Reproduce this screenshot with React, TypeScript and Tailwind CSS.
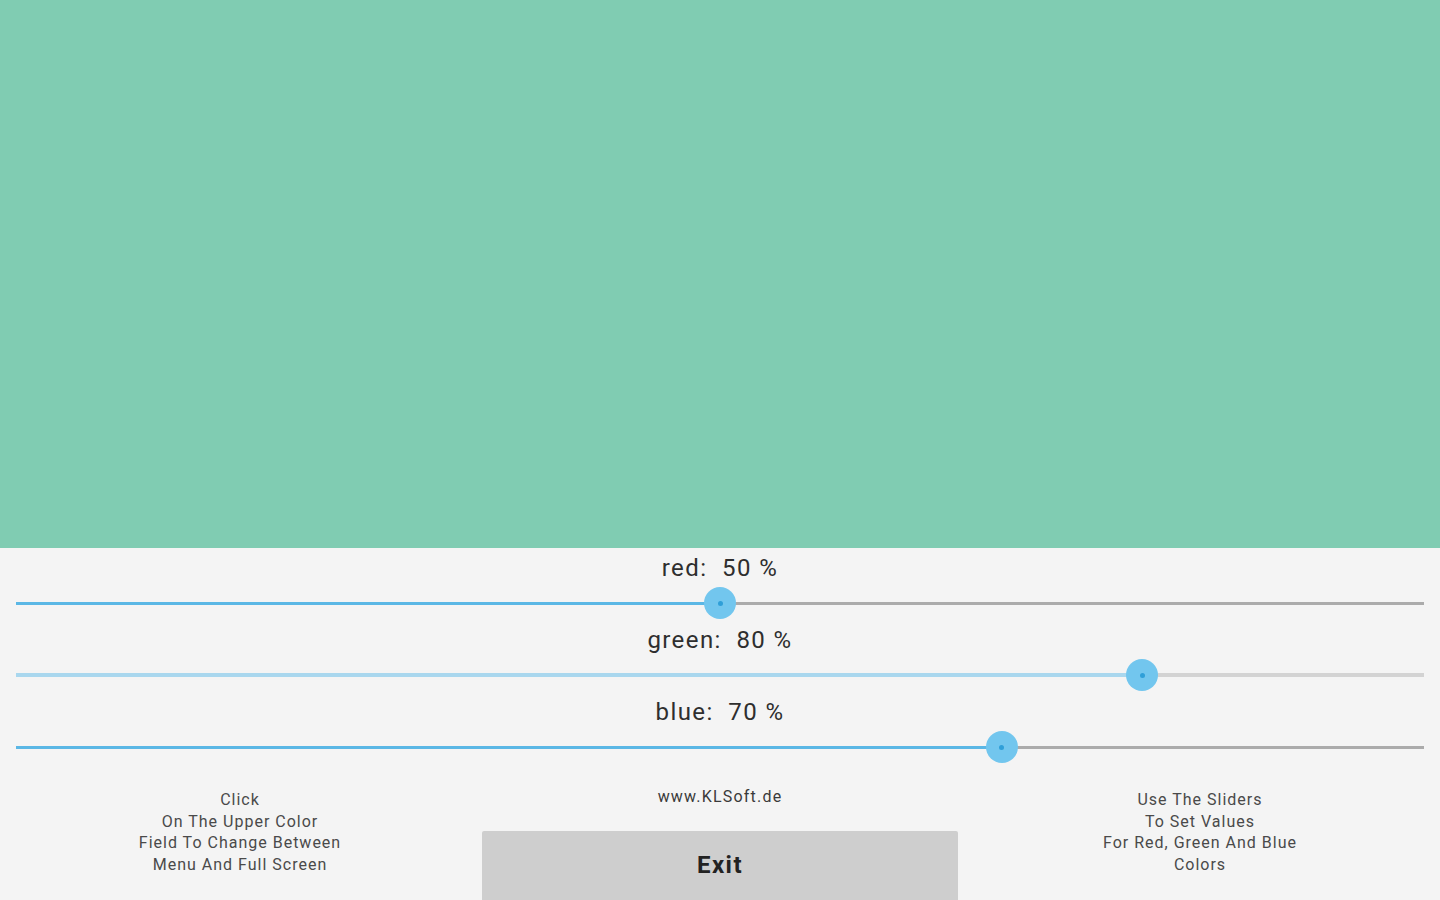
import React from 'react';

type SliderProps = {
  label: string;
  value: number;
  focused?: boolean;
};

const ColorSlider = ({ label, value, focused }: SliderProps) => {
  return (
    <div className="flex flex-col h-[72px]">
      <div className="h-[40px] flex items-center justify-center text-[24px] tracking-[1.4px] text-[#2e2e2e] whitespace-pre">
        {label}
      </div>
      <div className="h-[30px] px-[16px] flex items-center">
        <div className="relative w-full flex items-center">
          <div
            className={
              focused
                ? 'h-[4px] bg-[#a9d7ee]'
                : 'h-[3px] bg-[#5bb7e5]'
            }
            style={{ width: `${value}%` }}
          />
          <div
            className={
              focused
                ? 'h-[4px] flex-1 bg-[#d3d3d3]'
                : 'h-[3px] flex-1 bg-[#ababab]'
            }
          />
          <div
            className="absolute top-1/2 w-[32px] h-[32px] -ml-[16px] -mt-[16px] rounded-full bg-[#72c6ee] flex items-center justify-center"
            style={{ left: `${value}%` }}
          >
            <div className="w-[5px] h-[5px] rounded-full bg-[#2f9fd8]" />
          </div>
        </div>
      </div>
    </div>
  );
};

const App = () => {
  return (
    <div
      className="w-[1440px] h-[900px] flex flex-col bg-[#f4f4f4] overflow-hidden"
      style={{ fontFamily: 'Roboto, "Noto Sans", sans-serif' }}
    >
      <div className="h-[548px] bg-[#80ccb2]" />

      <ColorSlider label="red:  50 %" value={50} />
      <ColorSlider label="green:  80 %" value={80} focused />
      <ColorSlider label="blue:  70 %" value={70} />

      {/* bottom info */}
      <div className="flex-1 grid grid-cols-3 text-[16px] leading-[21.5px] tracking-[1px] text-[#4a4a4a]">
        <div className="flex flex-col items-center text-center pt-[25px]">
          <span>Click</span>
          <span>On The Upper Color</span>
          <span>Field To Change Between</span>
          <span>Menu And Full Screen</span>
        </div>
        <div className="flex flex-col items-center">
          <div className="pt-[22px] h-[67px] text-[16px] tracking-[1.2px] text-[#3a3a3a]">www.KLSoft.de</div>
          <button className="w-[476px] flex-1 bg-[#cecece] rounded-t-[2px] text-[24px] tracking-[1.5px] font-bold text-[#222]">
            Exit
          </button>
        </div>
        <div className="flex flex-col items-center text-center pt-[25px]">
          <span>Use The Sliders</span>
          <span>To Set Values</span>
          <span>For Red, Green And Blue</span>
          <span>Colors</span>
        </div>
      </div>
    </div>
  );
};

export default App;
